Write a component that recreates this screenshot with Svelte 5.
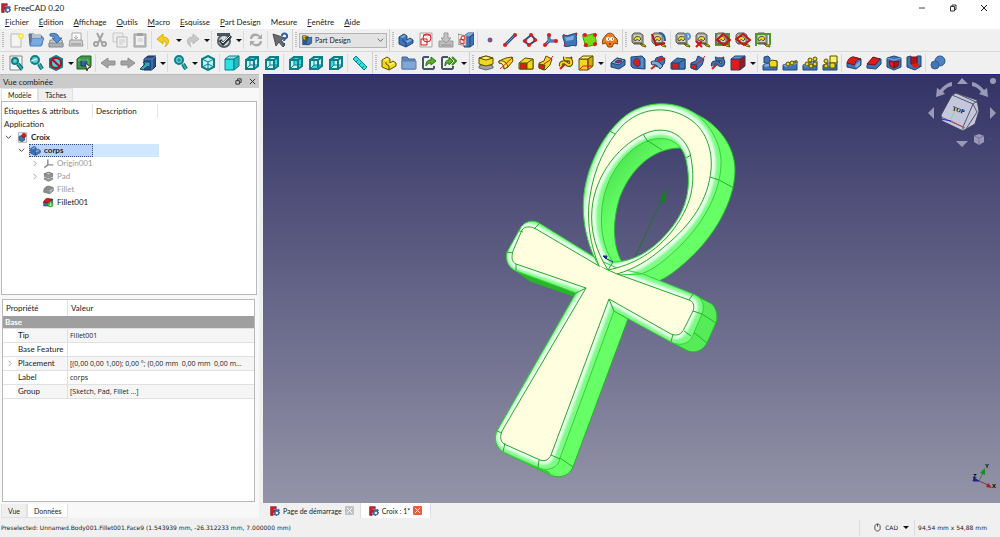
<script lang="ts">
    // [path, fill, stroke, stroke width], drawn on a 16x16 grid
    type Shape = [string, string, string?, number?];

    const teal = "#0d7f86";
    const cyan = "#2bdfe3";
    const navy = "#23456f";
    const blue = "#3f74b8";
    const sky = "#7fabdc";
    const red = "#e01b1b";
    const dark = "#5c5000";
    const gold = "#f0d81c";
    const pale = "#fcf06a";

    function circle(x: number, y: number, r: number) {
        return `M${x - r} ${y}a${r} ${r} 0 1 0 ${r * 2} 0a${r} ${r} 0 1 0 ${-r * 2} 0Z`;
    }

    function cube(front: string, top: string, side: string, line: string): Shape[] {
        return [
            ["M1 4H10V15H1Z", front, line, 1],
            ["M1 4L5 1H15L10 4Z", top, line, 1],
            ["M10 4L15 1V11L10 15Z", side, line, 1],
        ];
    }

    // Wire cube with one face filled
    function view(face: string): Shape[] {
        return [
            ["M1 5L6 1H15V10L10 15H1Z", "#c9f0f0"],
            [face, cyan],
            ["M6 1V10H15M6 10L1 15", "none", teal, 1],
            ["M2 5H10V14H2ZL6 2H14V11L10 14M10 5L14 2", "none", teal, 2],
        ];
    }

    function lens(x: number, y: number, r: number): Shape[] {
        return [
            [`M${x + r} ${y + r}L14 14`, "none", "#0b565c", 4],
            [`M${x + r} ${y + r}L14 14`, "none", "#29b6bb", 2],
            [circle(x, y, r), "#5fd0d1", "#0d7f86", 2],
        ];
    }

    const tape: Shape[] = [
        ["M1 3L3 1H9L12 3V12H3L1 10Z", "#a5a596", "#5e5e55", 1],
        ["M3 3H9L10 4V10H4L3 9Z", "#d0d0c4"],
        ["M3 8C3 4 9 3 10 7L8 9C7 7 5 7 5 9Z", gold, "#4c4a3c", 1],
        ["M9 12L14 13L15 15L11 14Z", gold, "#655b08", 1],
        ["M3 11H11", "none", "#48483f", 1],
    ];

    const body: Shape[] = [
        ["M1 5L6 2L9 4V8L12 6L15 8V11L8 15L1 12Z", blue, navy, 1],
        ["M2 5L6 3L8 4L5 6Z", sky],
        ["M8 9L12 7L14 8L9 11Z", sky],
        ["M5 7V9L8 11V15", "none", navy, 1],
    ];

    const yellowBody: Shape[] = body.map(([d, fill, stroke, width]) => [
        d, fill === blue ? gold : fill === sky ? pale : fill, stroke ? dark : undefined, width,
    ]);

    function pipe(main: string, line: string, cap: string): Shape[] {
        return [
            ["M1 8L6 6L8 1L14 4L12 10L7 15L1 13Z", main, line, 1],
            ["M1 9L7 10L6 15L1 13Z", cap, line, 1],
            ["M6 9L12 5L15 1", "none", red, 1],
        ];
    }

    function loft(main: string, line: string, cap: string): Shape[] {
        return [
            ["M1 8L7 3L15 4V14H1Z", main, line, 1],
            ["M2 8H9V14H2Z", cap, line, 1],
            ["M9 8L15 4V14H9Z", main, line, 1],
        ];
    }

    function helix(main: string, line: string): Shape[] {
        return [
            ["M2 14L14 2", "none", red, 2],
            ["M3 11C2 6 7 7 9 9S14 10 13 6S6 7 7 2", "none", line, 4],
            ["M3 11C2 6 7 7 9 9S14 10 13 6S6 7 7 2", "none", main, 2],
        ];
    }

    const wedge: Shape[] = [["M1 15V10L13 6H15V15Z", blue, navy, 1], ["M1 10L11 7L15 6V9L4 12Z", sky]];

    const icons: Record<string, Shape[]> = {
        logo: [
            ["M1 1H10V4H5V6H9V9H5V15H1Z", "#d21f2b", "#8d0c17", 1],
            ["M10 5L12 6L14 5L15 7L14 9L16 11L14 12V14L12 14L10 16L9 14L6 14L7 12L5 10L7 9L7 7L9 7Z", "#476ca8", "#294a80", 1],
            [circle(11, 11, 2), "#eef2fa"],
        ],
        new: [["M3 2H13V15H3Z", "#f4f4f4", "#b7b7b7", 1], [circle(13, 4, 3), "#f6e84a"], [circle(13, 4, 1), "#fffbd0"]],
        open: [["M1 2H6L7 4H14V13H2Z", "#6e7f92", "#57687a", 1], ["M4 6H16L13 14H2Z", "#79aae2", "#4d7fbe", 1], ["M4 2H13V6H4Z", "#b9c1ca"]],
        save: [["M2 8H14L15 14H1Z", "#c5c9cc", "#8d9296", 1], ["M1 11H15V15H1Z", "#a9aeb2", "#858b90", 1], ["M2 2C8 0 11 3 11 6H14L9 11L4 6H7C7 5 5 4 2 4Z", "#5b90cd", "#3a6da9", 1]],
        print: [["M4 1H13V9H4Z", "#fff", "#a9a9a9", 1], ["M2 8H14L15 14H1Z", "#cfcfcf", "#999", 1], ["M8 3V7M6 5L8 7L10 5", "none", "#aaa", 1], ["M3 12H13", "none", "#8b8b8b", 1]],
        cut: [["M5 1L10 11M11 1L6 11", "none", "#a4a4a4", 2], [circle(4, 12, 2), "none", "#a4a4a4", 2], [circle(12, 12, 2), "none", "#a4a4a4", 2]],
        copy: [["M1 1H11V10H1Z", "#ededed", "#c9c9c9", 1], ["M5 5H15V15H5Z", "#f0f0f0", "#b5b5b5", 1], ["M7 8H13M7 10H13M7 12H11", "none", "#c6c6c6", 1]],
        paste: [["M2 2H14V15H2Z", "#bdbdbd", "#a0a0a0", 1], ["M4 4H12V13H4Z", "#f0f0f0"], ["M5 1H11V4H5Z", "#a0a0a0"], ["M6 7H11M6 9H11", "none", "#c9c9c9", 1]],
        undo: [["M1 7L7 2V5C13 5 15 10 9 15C11 11 10 9 7 9V12Z", "#f0cf22", "#d6b010", 1]],
        redo: [["M15 7L9 2V5C3 5 1 10 7 15C5 11 6 9 9 9V12Z", "#c9c9c9", "#b8b8b8", 1]],
        check: [[circle(8, 9, 6), "#d5dade", "#55606b", 2], ["M1 1H14V4H1Z", "#4b535c"], ["M4 8L7 12L15 4", "none", "#2b333c", 3], ["M5 9L7 11L14 4", "none", "#e9ecef", 1]],
        refresh: [["M2 7C2 1 9 0 12 4L14 2V7H9L11 5C8 3 5 4 4 7Z", "#a9a9a9"], ["M14 9C14 15 7 16 4 12L2 14V9H7L5 11C8 13 11 12 12 9Z", "#a9a9a9"]],
        whats: [["M1 2L4 14L7 10L11 15L13 13L9 8L13 6Z", "#666c72", "#4b5157", 1], ["M10 4C10 0 16 1 15 5C14 7 12 6 12 9M12 11V13", "none", "#2c5f9e", 2]],
        part: [["M1 2H9L11 6V14H1Z", "#2d5a94", navy, 1], ["M7 5L14 3V12L9 14H6Z", blue, navy, 1], ["M1 1H6V7H2Z", gold, dark, 1], ["M4 3L8 8", "none", "#6a5500", 2]],
        body,
        sketch: [["M2 1H14V15H2Z", "#f4f4f4", "#a6a6a6", 1], ["M3 7H9V13H3Z", "none", red, 1], [circle(9, 6, 4), "none", red, 1], ["M5 3H13", "none", red, 1]],
        import: [["M1 9H15V15H1Z", "#bcbcbc", "#999", 1], ["M6 1H10V6H13L8 11L3 6H6Z", "#c4c4c4", "#999", 1], ["M3 13H13", "none", "#8f8f8f", 1]],
        mapSketch: [["M6 4L10 1H16V12L12 15H6Z", blue, navy, 1], ["M6 4L10 1H16L12 4Z", sky], ["M12 5L16 2M12 5V15", "none", navy, 1], ["M0 2L8 4V14L0 12Z", "#f2eeee", "#8a8a8a", 1], [circle(5, 6, 2), "none", red, 1], ["M2 7V11L6 12V8Z", "none", red, 1]],
        point: [[circle(8, 8, 2), "#d33a52", "#345f9e", 1]],
        line: [["M3 13L13 3", "none", "#1f4577", 3], ["M3 13L13 3", "none", sky, 1], [circle(3, 13, 2), red], [circle(13, 3, 2), red]],
        plane: [["M9 3L14 8L7 13L2 9Z", "none", "#25508a", 2], [circle(9, 3, 2), red], [circle(13, 8, 2), red], [circle(7, 13, 2), red], [circle(3, 9, 2), red]],
        axes: [["M7 3V9L3 13M7 9H14", "none", "#25508a", 3], ["M7 3V9L3 13M7 9H14", "none", sky, 1], [circle(7, 3, 2), red], [circle(3, 13, 2), red], [circle(14, 9, 2), red]],
        binder: [["M1 3C5 5 9 2 15 1C13 6 16 9 14 14C9 12 7 16 2 14C4 10 0 7 1 3Z", blue, navy, 1], ["M3 5C8 6 10 3 12 4L11 8L4 9Z", sky], [circle(2, 3, 1), red], [circle(14, 2, 1), red], [circle(3, 13, 1), red]],
        subBinder: [["M1 2C6 5 9 1 14 2C12 6 16 9 13 14C9 12 7 16 2 14C4 10 0 7 1 2Z", "#7bd819", "#4a8d12", 1], [circle(3, 3, 2), red], [circle(13, 3, 2), red], [circle(13, 12, 2), red], [circle(4, 13, 2), red]],
        clone: [["M4 3C7 0 11 1 12 4L15 7L16 12L12 11L10 15H6L4 11L0 12L1 7Z", "#ee7d1d", "#8a4309", 1], [circle(6, 7, 2), "#fff"], [circle(10, 7, 2), "#fff"], ["M6 7H7M10 7H11M8 11V13", "none", "#111", 1]],
        tape,
        angle: [...tape, ["M1 2L5 13L14 11", "none", "#bd1016", 2], ["M8 1C13 1 14 5 14 9", "none", "#285d9f", 2]],
        tapeRefresh: [...tape, ["M10 6C9 1 14 0 15 4C15 8 11 8 10 6", "none", "#5d91cd", 2]],
        tapeClear: [...tape, ["M1 9L7 15M7 9L1 15", "none", "#d0121b", 2]],
        toggleAll: [["M0 1H15V14H0Z", "#4a9a29"], ...tape, ["M2 8L8 2L15 8L9 13Z", "none", "#c8131b", 2]],
        toggle3d: [...tape, ["M1 7L8 2L15 8L9 13Z", "none", "#c8131b", 2]],
        toggleDelta: [...tape, ["M1 14V2H15V13", "none", "#4a9a29", 2]],
        fitAll: [["M2 1H14V15H2Z", "#f5f5f5", "#7c8b8c", 1], ...lens(7, 6, 3)],
        fitSel: [...lens(7, 5, 4), ["M3 6L9 4", "none", "#fff", 1]],
        drawStyle: [["M8 1L14 4V12L8 15L2 12V4Z", cyan, teal, 2], [circle(8, 8, 5), "none", "#b30d1b", 2], ["M4 4L12 12", "none", "#b30d1b", 2]],
        boundBox: [["M1 4L5 1H15V11L12 14H1Z", "#3f9b44", "#1e5b22", 1], ["M5 5H11L12 11H5Z", "#3566a8", "#14335f", 1], ["M2 5H12V14", "none", "#7ed56f", 1], ["M9 8L15 12L12 13L11 16Z", "#eee", "#333", 1]],
        back: [["M1 8L8 3V6H15V10H8V13Z", "#a3a3a3", "#8d8d8d", 1]],
        forward: [["M15 8L8 3V6H1V10H8V13Z", "#a3a3a3", "#8d8d8d", 1]],
        linkGo: [["M4 4L8 1H16V11L12 15H4Z", "#294f86", "#132c50", 1], ["M12 4L16 1M12 4V15M4 4H12", "none", "#5b87be", 1], ["M0 14L5 9L3 7H10V13L8 11L3 15Z", "#39a5bf", "#0b4957", 1]],
        zoom: [...lens(7, 5, 4), ["M5 5H9M7 3V7", "none", "#0d7f86", 1]],
        iso: [["M8 1L14 4V12L8 15L2 12V4Z", "#bfeeee", teal, 2], ["M2 4L8 7L14 4M8 7V15M2 12L8 9L14 12", "none", teal, 1]],
        front: cube(cyan, "#8ce9e8", "#28b7bc", teal),
        top: view("M2 5L6 2H14L10 5Z"),
        right: view("M10 5L14 2V11L10 14Z"),
        rear: view("M6 2H14V10H6Z"),
        bottom: view("M2 14L6 10H14L10 14Z"),
        left: view("M2 5L6 2V10L2 14Z"),
        ruler: [["M1 4L4 1L15 12L12 15Z", cyan, teal, 1], ["M4 7L6 5M7 10L9 8M10 13L12 11", "none", teal, 1]],
        yellowBody,
        folder: [["M1 2H6L8 4H14V14H1Z", "#5f84b4", "#46699a", 1], ["M1 6H15V14H1Z", "#81a7d6", "#5a7fae", 1]],
        link: [["M8 2H3L2 3V13L3 14H12L13 13V11", "none", "#445566", 2], ["M5 11C5 6 7 5 10 5V2L15 6L10 10V8C8 8 6 9 5 11Z", "#57b428", "#2f7010", 1]],
        links: [["M7 2H2L1 3V13L2 14H11L12 13V11", "none", "#445566", 2], ["M4 11C4 6 6 5 8 5V2L12 6L8 10V8C6 8 5 9 4 11Z", "#57b428", "#2f7010", 1], ["M11 2L15 6L11 10", "none", "#3c8a19", 2]],
        pad: [["M1 11L8 9L15 11V13L8 15L1 13Z", "#a2a2a2", "#6b6b6b", 1], ["M1 3L8 1L15 3V9L8 11L1 9Z", gold, dark, 1], ["M1 3L8 1L15 3L8 5Z", pale, dark, 1]],
        revolution: [["M1 6L8 3L14 2L15 6L10 12L6 14C6 10 4 8 1 8Z", gold, dark, 1], ["M1 6C6 5 9 8 10 12L6 14C6 10 4 8 1 8Z", pale, dark, 1], ["M2 14L15 2", "none", red, 1]],
        loft: loft(gold, dark, red),
        pipe: pipe(gold, dark, red),
        helix: helix(gold, dark),
        box: [...cube(gold, pale, "#c9b200", dark), ["M2 14L5 11H14M10 5V13", "none", red, 1]],
        pocket: [["M1 8L7 3L15 5V10L9 14L1 12Z", blue, navy, 1], ["M1 8L7 3L15 5L9 10Z", sky, navy, 1], ["M5 7L8 5L12 6L9 8Z", red, navy, 1]],
        hole: [["M1 2L12 1L15 4V14L3 13L1 11Z", blue, navy, 1], ["M5 4C9 2 10 6 10 8S9 12 6 11S3 6 5 4Z", red, navy, 1], ["M12 3V13", "none", sky, 1]],
        groove: [["M1 14L15 3", "none", red, 2], ["M6 3L12 1L15 5L14 9L7 12L4 8Z", blue, navy, 1], ["M1 7C4 5 9 6 13 11L10 14C7 10 5 9 2 10Z", sky, navy, 1], ["M7 4L12 2L14 5L8 7Z", red]],
        subLoft: loft(blue, navy, red),
        subPipe: pipe(blue, navy, red),
        subHelix: helix(blue, navy),
        subBox: cube(red, "#5f95d4", "#a91515", navy),
        mirrored: [...wedge, ["M2 2L6 1L8 3V8H2Z", blue, navy, 1], ["M7 7L10 5L15 6V12H8Z", gold, dark, 1]],
        linear: [...wedge, [circle(6, 9, 2), gold, dark, 1], [circle(10, 8, 2), gold, dark, 1], [circle(14, 7, 1), gold, dark, 1]],
        polar: [...wedge, [circle(5, 9, 2), gold, dark, 1], [circle(9, 11, 2), gold, dark, 1], [circle(8, 5, 2), gold, dark, 1], [circle(13, 4, 2), gold, dark, 1], [circle(13, 9, 2), gold, dark, 1]],
        multi: [...wedge, ["M8 1H15V8H8Z", pale, dark, 1], ["M8 8H13V13H8Z", gold, dark, 1], [circle(4, 6, 2), gold, dark, 1], [circle(4, 11, 2), gold, dark, 1]],
        fillet: [["M1 8L6 2L15 4V10L10 14L1 12Z", blue, navy, 1], ["M1 8C2 4 4 2 8 2L15 4C11 4 9 6 9 10Z", red, "#7b1414", 1], ["M9 10L14 6V10L10 13Z", sky]],
        chamfer: [["M1 10L7 3L15 4V9L10 14L1 13Z", blue, navy, 1], ["M1 9L7 2L14 4L9 10Z", red, "#7b1414", 1]],
        draft: [["M1 3L8 1L15 3V12L8 15L1 12Z", blue, navy, 1], ["M3 6L8 7V13L4 11Z", red, "#7b1414", 1], ["M8 7L13 6L12 11L8 13Z", "#b31616", "#7b1414", 1], ["M1 3L8 5L15 3", "none", sky, 1]],
        thickness: [["M1 2L5 1V9L14 8V12L9 15L1 12Z", blue, navy, 1], ["M11 1H15V12L11 9Z", blue, navy, 1], ["M5 2H11V8L5 9Z", "#b31616", "#7b1414", 1], ["M5 9L11 8L14 11L8 13Z", red]],
        boolean: [[circle(10, 6, 5), "#4f83c4", "#2f598f", 1], [circle(5, 10, 4), "#4577b7", "#2f598f", 1]],
        doc: [["M2 1H14V15H2Z", "#f5f5f5", "#8c8c8c", 1], ["M3 6L8 5L11 7V12L7 14L3 12Z", blue, navy, 1], [circle(10, 5, 3), "#dd1c1c", "#7d0c0c", 1]],
        origin: [["M7 2V10L2 14M7 10H15", "none", "#8a8a8a", 2]],
        padGray: [["M2 4L8 2L14 4V8L8 10L2 8Z", "#9a9a9a", "#666", 1], ["M2 4L8 2L14 4L8 6Z", "#c7c7c7", "#666", 1], ["M2 10L8 12L14 10V12L8 15L2 12Z", "#a5a5a5", "#666", 1]],
        filletGray: [["M1 9C2 5 5 3 8 3L15 5V10L10 14L1 12Z", "#8c8c8c", "#767676", 1], ["M9 9L14 6V10L10 13Z", "#b1b1b1"]],
        filletTip: [["M1 7L5 3H14V9L9 13H1Z", blue, navy, 1], ["M1 8C2 4 4 2 7 2L14 4C11 4 9 6 9 9Z", red, "#7b0a0a", 1], [circle(11, 11, 4), "#31b52f"], ["M11 8V13M9 11L11 13L13 11", "none", "#fff", 1]],
    };

    // "|" separator, "v" drop-down arrow, anything else is an icon
    const fileBar = "new open save print | cut copy paste | undo v redo v | check v | refresh | whats".split(" ");
    const partBar = "body sketch import mapSketch | point line plane axes binder subBinder clone".split(" ");
    const measureBar = "tape angle | tapeRefresh tapeClear toggleAll toggle3d toggleDelta".split(" ");
    const viewBar = "fitAll fitSel drawStyle v boundBox | back forward linkGo v | zoom v iso | front top right | rear bottom left | ruler".split(" ");
    const structBar = "yellowBody folder link links v".split(" ");
    const modelBar = "pad revolution loft pipe helix box v | pocket hole groove subLoft subPipe subHelix subBox v | mirrored linear polar multi | fillet chamfer draft thickness | boolean".split(" ");

    const menus = [
        ["", "F", "ichier"], ["", "É", "dition"], ["", "A", "ffichage"], ["", "O", "utils"], ["", "M", "acro"],
        ["", "E", "squisse"], ["", "P", "art Design"], ["Mesure", "", ""], ["", "F", "enêtre"], ["", "A", "ide"],
    ];

    const tree = [
        { label: "Croix", icon: "doc", level: 0, arrow: "open", kind: "bold" },
        { label: "corps", icon: "body", level: 1, arrow: "open", kind: "bold" },
        { label: "Origin001", icon: "origin", level: 2, arrow: "closed", kind: "hidden" },
        { label: "Pad", icon: "padGray", level: 2, arrow: "closed", kind: "hidden" },
        { label: "Fillet", icon: "filletGray", level: 2, arrow: "", kind: "hidden" },
        { label: "Fillet001", icon: "filletTip", level: 2, arrow: "", kind: "" },
    ];

    const properties = [
        ["Tip", "Fillet001"],
        ["Base Feature", ""],
        ["Placement", "[(0,00 0,00 1,00); 0,00 °; (0,00 mm  0,00 mm  0,00 m..."],
        ["Label", "corps"],
        ["Group", "[Sketch, Pad, Fillet ...]"],
    ];

    let selected = $state("corps");
    let workbench = $state("Part Design");
</script>

{#snippet icon(name: string)}
    <svg class="icon" viewBox="0 0 16 16" aria-hidden="true">
        {#each icons[name] as [d, fill, stroke, width]}
            <path {d} {fill} stroke={stroke ?? "none"} stroke-width={width ?? 0} />
        {/each}
    </svg>
{/snippet}

{#snippet toolbar(items: string[])}
    <div class="toolbar" role="toolbar">
        <span class="handle"></span>
        {#each items as item}
            {#if item === "|"}
                <span class="separator"></span>
            {:else if item === "v"}
                <button class="drop" aria-label="more"><span class="caret"></span></button>
            {:else}
                <button class="tool" aria-label={item}>{@render icon(item)}</button>
            {/if}
        {/each}
    </div>
{/snippet}

{#snippet chevron(kind: string)}
    <svg class="chevron" viewBox="0 0 8 8" aria-hidden="true">
        <path d={kind === "open" ? "M1 2L4 5L7 2" : "M3 1L6 4L3 7"} fill="none" stroke={kind === "open" ? "#333" : "#999"} />
    </svg>
{/snippet}

{#snippet cross()}
    <svg class="cross" viewBox="0 0 8 8" aria-hidden="true">
        <path d="M1 1L7 7M7 1L1 7" fill="none" stroke="currentColor" />
    </svg>
{/snippet}

<div class="window">
    <header class="titlebar">
        {@render icon("logo")}
        <span class="title">FreeCAD 0.20</span>
        <button class="control" aria-label="Minimize">
            <svg viewBox="0 0 8 8"><path d="M1 4H7" stroke="#444" /></svg>
        </button>
        <button class="control" aria-label="Restore">
            <svg viewBox="0 0 8 8"><path d="M1.5 2.5H5.5V7H1.5ZM3 2.5V1H7V5.5H5.5" fill="none" stroke="#333" /></svg>
        </button>
        <button class="control" aria-label="Close">{@render cross()}</button>
    </header>

    <nav class="menubar">
        {#each menus as [before, key, after]}
            <button>{before}<u>{key}</u>{after}</button>
        {/each}
    </nav>

    <div class="toolrow">
        {@render toolbar(fileBar)}
        <div class="toolbar">
            <span class="handle"></span>
            <label class="workbench">
                {@render icon("part")}
                <select aria-label="Workbench" bind:value={workbench}>
                    <option>Part Design</option>
                    <option>Sketcher</option>
                </select>
                <svg class="chevron" viewBox="0 0 8 8"><path d="M1 2L4 5L7 2" fill="none" stroke="#555" /></svg>
            </label>
        </div>
        {@render toolbar(partBar)}
        {@render toolbar(measureBar)}
    </div>
    <div class="toolrow">
        {@render toolbar(viewBar)}
        {@render toolbar(structBar)}
        {@render toolbar(modelBar)}
    </div>

    <main>
        <aside>
            <div class="dock-title">
                <span>Vue combinée</span>
                <button aria-label="Float">
                    <svg viewBox="0 0 8 8"><path d="M3 3V1H7V5H5M1 3H5V7H1Z" fill="none" stroke="#222" /></svg>
                </button>
                <button aria-label="Close panel">{@render cross()}</button>
            </div>
            <div class="tabs top">
                <button class="current">Modèle</button>
                <button>Tâches</button>
            </div>
            <div class="tree">
                <div class="tree-head"><span>Étiquettes &amp; attributs</span><span>Description</span></div>
                <div class="root">Application</div>
                {#each tree as node}
                    <button class="node level{node.level} {node.kind}" class:selected={selected === node.label} onclick={() => selected = node.label}>
                        <span class="cell">
                            <span class="branch">{#if node.arrow}{@render chevron(node.arrow)}{/if}</span>
                            <span class="name">{@render icon(node.icon)}{node.label}</span>
                        </span>
                        <span class="description"></span>
                    </button>
                {/each}
            </div>
            <div class="properties">
                <table>
                    <thead>
                        <tr><th>Propriété</th><th>Valeur</th></tr>
                    </thead>
                    <tbody>
                        <tr class="group"><td colspan="2">Base</td></tr>
                        {#each properties as [name, value]}
                            <tr>
                                <td class="key"><div><span class="branch">{#if name === "Placement"}{@render chevron("closed")}{/if}</span><span class="key-name">{name}</span></div></td>
                                <td class="value">{value}</td>
                            </tr>
                        {/each}
                    </tbody>
                </table>
            </div>
            <div class="tabs bottom">
                <button>Vue</button>
                <button class="current">Données</button>
            </div>
        </aside>

        <section class="documents">
            <div class="viewport">
                <svg viewBox="263 75 737 428" role="img" aria-label="Croix">
                    <defs>
                        <filter id="soft" x="-10%" y="-10%" width="120%" height="120%"><feGaussianBlur stdDeviation="1" /></filter>
                        <linearGradient id="side" x1="0" y1="0" x2="1" y2="1">
                            <stop offset="0" stop-color="#28b52a" />
                            <stop offset="0.2" stop-color="#48df4b" />
                            <stop offset="0.4" stop-color="#66ff66" />
                        </linearGradient>
                        <path id="ring-rim" fill-rule="evenodd" d="M599 266C587 246 581 218 584 194C588 162 605 132 625 116C646 100 675 100 696 114C714 128 722 149 721 165C720 192 705 220 683 243C667 259 655 269 641 274L617 275L600 270ZM613 262C603 248 600 228 602 208C605 176 626 148 650 140C665 136 679 140 685 156C693 185 687 211 668 232C653 250 634 262 613 262Z" />
                        <path id="ring-face" fill-rule="evenodd" d="M599 266C588 239 587 214 590 196C594 169 606 143 622 126C639 109 665 104 688 118C705 128 713 149 711 170C708 200 692 224 664 247C648 261 634 269 617 274L604 275ZM608 270C596 251 590 231 592 209C595 174 621 142 649 132C668 126 684 135 690 153C697 184 691 206 673 230C656 252 633 265 608 270Z" />
                        <path id="cross-rim" d="M599 260L539 223C532 219 523 222 520 229L507 252C505 261 509 268 516 271L576 293L497 431C493 439 497 448 503 452L539 468C549 472 559 467 560 458L614 311L671 342C681 347 689 343 692 337L702 314C706 304 701 297 693 294L643 274L617 268Z" />
                        <path id="cross-face" d="M599 266L536 229C530 226 525 226 522 230L513 251C511 258 512 262 516 264L586 288L502 431C500 436 500 441 504 444L540 460C546 462 549 459 551 455L609 299L671 334C678 337 682 333 684 329L693 311C695 306 693 301 689 300L617 274L608 270Z" />
                        <clipPath id="ring-clip"><use href="#ring-rim" clip-rule="evenodd" /></clipPath>
                        <clipPath id="cross-clip"><use href="#cross-rim" /></clipPath>
                    </defs>

                    <!-- extruded sides -->
                    <g stroke="#25b42a" stroke-width="1">
                        <path fill="url(#side)" fill-rule="evenodd" d="M696 114C718 124 735 146 735 170C735 203 712 239 687 261C677 270 668 277 659 281L630 272L602 264L590 225L590 190L597 160L612 135L640 115L670 108ZM622 262C613 247 612 221 620 197C630 171 651 148 681 148C690 155 691 182 688 207C675 235 650 260 622 262Z" />
                        <path fill="#28b52a" d="M516 271L530 281L576 297L582 288Z" />
                        <path fill="#66ff66" d="M614 311L628 319L573 467C568 478 558 478 550 475L503 452L539 450Z" />
                        <path fill="#55ec57" d="M693 294L712 304C717 309 718 317 716 323L707 343C702 352 693 354 686 350L671 342L680 310Z" />
                        <path fill="#35c638" stroke="none" d="M503 452L539 468L548 471L552 475L530 466Z" />
                        <path fill="none" d="M702 314L716 323M692 331L707 343M560 458L573 467M719 180L734 188M648 141L662 150" />
                    </g>

                    <!-- rounded edges -->
                    <use href="#ring-rim" fill="#7dfb84" />
                    <use href="#cross-rim" fill="#7dfb84" />
                    <g clip-path="url(#ring-clip)">
                        <use href="#ring-face" fill="#e8ffec" stroke="#e8ffec" stroke-width="9" filter="url(#soft)" />
                    </g>
                    <g clip-path="url(#cross-clip)">
                        <use href="#cross-face" fill="#e8ffec" stroke="#e8ffec" stroke-width="8" filter="url(#soft)" />
                    </g>
                    <use href="#ring-rim" fill="none" stroke="#35cf3b" />
                    <use href="#cross-rim" fill="none" stroke="#35cf3b" />
                    <use href="#ring-face" fill="#ffffe0" stroke="#25a82b" />
                    <use href="#cross-face" fill="#ffffe0" stroke="#25a82b" />
                    <path d="M600 266L608 271L617 275L611 279L597 271Z" fill="#ffffe0" />
                    <path d="M610 131L615 134M643 134L648 142M686 158L691 155M710 177L719 180M534 229L540 223M517 230L523 232M507 252L513 253M516 264V271M576 293L586 288M497 431L502 433M505 443L503 452M539 460L538 468M551 455L560 459M609 299L614 311M673 334L671 342M684 331L691 336M693 311L702 314M689 300L693 294M613 262L608 270" fill="none" stroke="#25a82b" />

                    <!-- sketch axes -->
                    <path d="M635 257L663 197" fill="none" stroke="#23702c" />
                    <path d="M667 188L659 200L665 203Z" fill="#1d7a25" />
                    <path d="M613 262L605 258" stroke="#20208a" />
                    <path d="M603 256L607 256L606 259Z" fill="#20208a" stroke="#20208a" />

                    <!-- navigation cube -->
                    <g fill="#9a9ab8">
                        <path d="M957 84H968L962 78ZM956 141H968L962 147ZM928 113L934 107V119ZM996 113L990 107V119Z" />
                        <circle cx="993" cy="81" r="3" />
                        <path d="M952 82V86C947 87 944 90 943 92L945 94L936 97L937 88L940 90C943 86 947 83 952 82ZM972 82V86C977 87 980 90 981 92L979 94L988 97L987 88L984 90C981 86 977 83 972 82Z" />
                        <path d="M979 134L984 136V142L979 145L974 142V136Z" />
                    </g>
                    <path d="M974 136L979 138L984 136M979 138V145" fill="none" stroke="#74749c" />
                    <path d="M987 138H993L990 141Z" fill="#4a4a69" />
                    <path d="M952 95L956 93L977 100L979 111L975 124L963 131L942 121L941 115Z" fill="#c4c7dc" stroke="#41415c" />
                    <path d="M952 95L973 104L963 127L941 117M973 104L977 101M963 127V131M973 104L977 112L966 129M956 93L978 103" fill="none" stroke="#555570" />
                    <path d="M941 119L951 121" stroke="#2525e0" />
                    <path d="M951 121L965 128" stroke="#cc4d4d" />
                    <path d="M951 119L955 110" stroke="#7be07b" />
                    <text class="cube-text" transform="translate(952 110) rotate(18)">TOP</text>

                    <!-- axis cross -->
                    <path d="M979 481L988 485" stroke="#8d3037" />
                    <path d="M992 488L986 487L988 483Z" fill="#a81c1c" />
                    <path d="M979 481L983 473" stroke="#34883d" />
                    <path d="M985 468L980 473L985 475Z" fill="#1f8a2b" />
                    <path d="M979 481L974 478L973 481Z" fill="#20208a" stroke="#20208a" />
                    <text class="axis" x="985" y="468">Y</text>
                    <text class="axis" x="992" y="488">X</text>
                    <text class="axis" x="973" y="478">Z</text>
                </svg>
            </div>
            <div class="doc-tabs">
                <div class="doc-tab">
                    {@render icon("logo")}<button class="doc-name">Page de démarrage</button>
                    <button class="close" aria-label="Close">{@render cross()}</button>
                </div>
                <div class="doc-tab active">
                    {@render icon("logo")}<button class="doc-name">Croix : 1*</button>
                    <button class="close" aria-label="Close">{@render cross()}</button>
                </div>
            </div>
        </section>
    </main>

    <footer>
        <span class="message">Preselected: Unnamed.Body001.Fillet001.Face9 (1.543939 mm, -26.312233 mm, 7.000000 mm)</span>
        <button class="nav-style">
            <svg class="mouse" viewBox="0 0 8 10"><path d="M1 4C1 0 7 0 7 4V6C7 10 1 10 1 6ZM4 1V4" fill="none" stroke="#333" /></svg>
            CAD
            <span class="caret"></span>
        </button>
        <span class="size">94,54 mm x 54,88 mm</span>
    </footer>
</div>

<style>
    :global(body) {
        margin: 0;
    }

    .window {
        display: flex;
        flex-direction: column;
        height: 100vh;
        overflow: hidden;
        background: #f0f0f0;
        color: #1b1b1b;
        font: 8px/12px Lato, "Open Sans", sans-serif;
    }

    button, select {
        margin: 0;
        padding: 0;
        border: 0;
        background: none;
        color: inherit;
        font: inherit;
    }

    svg {
        display: block;
    }

    .icon {
        width: 16px;
        height: 16px;
        flex-shrink: 0;
    }

    .chevron, .cross {
        width: 7px;
        height: 7px;
        flex-shrink: 0;
    }

    .caret {
        display: block;
        border: 3px solid transparent;
        border-top-color: #111;
        border-bottom-width: 0;
    }

    .titlebar {
        display: flex;
        align-items: center;
        height: 15px;
        padding-right: 9px;
        background: #fff;
    }

    .titlebar .icon {
        width: 10px;
        height: 10px;
        margin: 0 3px 0 1px;
    }

    .title {
        flex: 1;
    }

    .control {
        display: grid;
        place-items: center;
        width: 15px;
        height: 15px;
        margin-left: 16px;
    }

    .control svg {
        width: 8px;
        height: 8px;
    }

    .menubar {
        display: flex;
        gap: 10px;
        height: 14px;
        padding-left: 5px;
        background: #fff;
    }

    .menubar button {
        line-height: 14px;
    }

    .toolrow {
        display: flex;
        height: 22px;
        border-bottom: 1px solid #d8d8d8;
    }

    .toolrow + .toolrow {
        border-bottom: 0;
    }

    .toolbar {
        display: flex;
        align-items: center;
        padding-right: 2px;
        border-right: 1px solid #d0d0d0;
    }

    .toolbar:last-child {
        border-right: 0;
    }

    .handle {
        width: 2px;
        height: 16px;
        margin: 0 2px;
        background: repeating-linear-gradient(#bbb 0 1px, transparent 1px 2px);
    }

    .tool {
        display: grid;
        place-items: center;
        width: 20px;
        height: 20px;
    }

    .drop {
        width: 8px;
        padding-left: 2px;
    }

    .separator {
        width: 1px;
        height: 18px;
        margin: 0 2px 0 1px;
        background: #dadada;
    }

    .workbench {
        display: flex;
        align-items: center;
        width: 86px;
        height: 13px;
        border: 1px solid #b4b4b4;
        background: #e3e3e3;
    }

    .workbench .icon {
        width: 11px;
        height: 11px;
        margin: 0 2px;
    }

    .workbench select {
        flex: 1;
        min-width: 0;
        appearance: none;
        font-size: 7px;
    }

    .workbench .chevron {
        margin-right: 2px;
    }

    main {
        display: flex;
        flex: 1;
        min-height: 0;
    }

    aside {
        display: flex;
        flex-direction: column;
        width: 259px;
        margin-right: 4px;
        background: #f8f8f8;
    }

    .dock-title {
        display: flex;
        align-items: center;
        height: 14px;
        padding: 0 3px;
        border-top: 1px solid #bbb;
        box-sizing: border-box;
        background: #cbcbcb;
    }

    .dock-title span {
        flex: 1;
    }

    .dock-title button {
        margin-left: 7px;
    }

    .dock-title svg {
        width: 7px;
        height: 7px;
    }

    .tabs {
        display: flex;
        height: 14px;
        padding-left: 1px;
        font-size: 7px;
    }

    .tabs button {
        padding: 0 6px;
        border: 1px solid #e1e1e1;
        background: #efefef;
    }

    .tabs .current {
        background: #fff;
    }

    .tabs.top {
        height: 13px;
    }

    .tabs.top button {
        border-bottom: 0;
    }

    .tabs.bottom button {
        border-top: 0;
    }

    .tree {
        flex: 1;
        margin: 0 2px 0 1px;
        border: 1px solid #b9b9b9;
        background: #fff;
    }

    .tree-head {
        display: flex;
        padding-top: 2px;
    }

    .tree-head span {
        width: 61px;
        padding-left: 3px;
        line-height: 14px;
        border-right: 1px solid #e3e3e3;
    }

    .tree-head span:first-child {
        width: 88px;
        padding-left: 2px;
    }

    .root {
        padding-left: 2px;
        line-height: 13px;
    }

    .node {
        display: flex;
        width: 157px;
        height: 13px;
        text-align: left;
    }

    .cell {
        display: flex;
        align-items: center;
        width: 91px;
    }

    .description {
        flex: 1;
        height: 13px;
    }

    .branch {
        display: inline-grid;
        place-items: center;
        width: 13px;
        flex-shrink: 0;
    }

    .node .branch {
        margin-right: 1px;
    }

    .level1 .cell {
        padding-left: 13px;
        width: 78px;
    }

    .level2 .cell {
        padding-left: 26px;
        width: 65px;
    }

    .name {
        display: flex;
        flex: 1;
        align-items: center;
        gap: 3px;
        height: 11px;
        line-height: 11px;
        border: 1px solid transparent;
    }

    .name .icon {
        width: 11px;
        height: 11px;
    }

    .bold {
        font-weight: bold;
    }

    .hidden {
        color: #999;
    }

    .selected .name {
        border: 1px dotted #334d80;
        background: #b9d3ff;
    }

    .selected .description {
        background: #cfe7ff;
    }

    .properties {
        height: 201px;
        margin: 4px 4px 2px 2px;
        border: 1px solid #b9b9b9;
        background: #fff;
    }

    table {
        width: 100%;
        table-layout: fixed;
        border-collapse: collapse;
    }

    th {
        height: 16px;
        padding: 0 3px;
        font-weight: normal;
        text-align: left;
    }

    th:first-child {
        width: 58px;
        border-right: 1px solid #e3e3e3;
    }

    td {
        height: 13px;
        padding: 0 0 0 2px;
        border-bottom: 1px solid #e0e0e0;
    }

    .group td {
        height: 12px;
        background: #9f9f9f;
        color: #fff;
        font-weight: bold;
    }

    .key {
        padding: 0;
        border-right: 1px solid #e0e0e0;
    }

    .key div {
        display: flex;
    }

    .key-name {
        flex: 1;
        padding-left: 2px;
        line-height: 13px;
    }

    .value {
        font: 7px/12px "Open Sans", sans-serif;
        white-space: pre;
    }

    tbody tr:nth-child(even) .value, tbody tr:nth-child(even) .key-name {
        background: #f5f5f5;
    }

    .documents {
        display: flex;
        flex: 1;
        flex-direction: column;
        min-width: 0;
    }

    .viewport {
        flex: 1;
        min-height: 0;
        border-top: 1px solid #26268c;
        background: linear-gradient(#333366, #9494a8);
    }

    .viewport svg {
        width: 100%;
        height: 100%;
    }

    .cube-text {
        font: bold 6px "Liberation Serif", serif;
    }

    .axis {
        font: bold 6px "Liberation Sans", sans-serif;
    }

    .doc-tabs {
        display: flex;
        height: 15px;
        padding-left: 1px;
        font-size: 7px;
    }

    .doc-tab {
        display: flex;
        align-items: center;
        padding: 0 6px;
        border-right: 1px solid #ddd;
    }

    .doc-tab .icon {
        width: 10px;
        height: 10px;
        margin-right: 3px;
    }

    .active {
        padding: 0 8px;
        background: #fff;
    }

    .close {
        display: grid;
        place-items: center;
        width: 9px;
        height: 9px;
        margin-left: 3px;
        border-radius: 1px;
        background: #bfc3c3;
        color: #fff;
    }

    .active .close {
        background: #e2603f;
    }

    footer {
        display: flex;
        align-items: center;
        height: 19px;
        font-family: "DejaVu Sans", sans-serif;
        font-size: 6px;
    }

    .message {
        flex: 1;
        padding-left: 1px;
    }

    .nav-style {
        display: flex;
        align-items: center;
        gap: 4px;
        height: 16px;
        padding: 0 5px 0 14px;
        border: solid #dcdcdc;
        border-width: 0 1px;
    }

    .mouse {
        width: 7px;
        height: 9px;
    }

    .nav-style .caret {
        margin-left: 1px;
    }

    .size {
        padding: 0 13px 0 3px;
    }
</style>
